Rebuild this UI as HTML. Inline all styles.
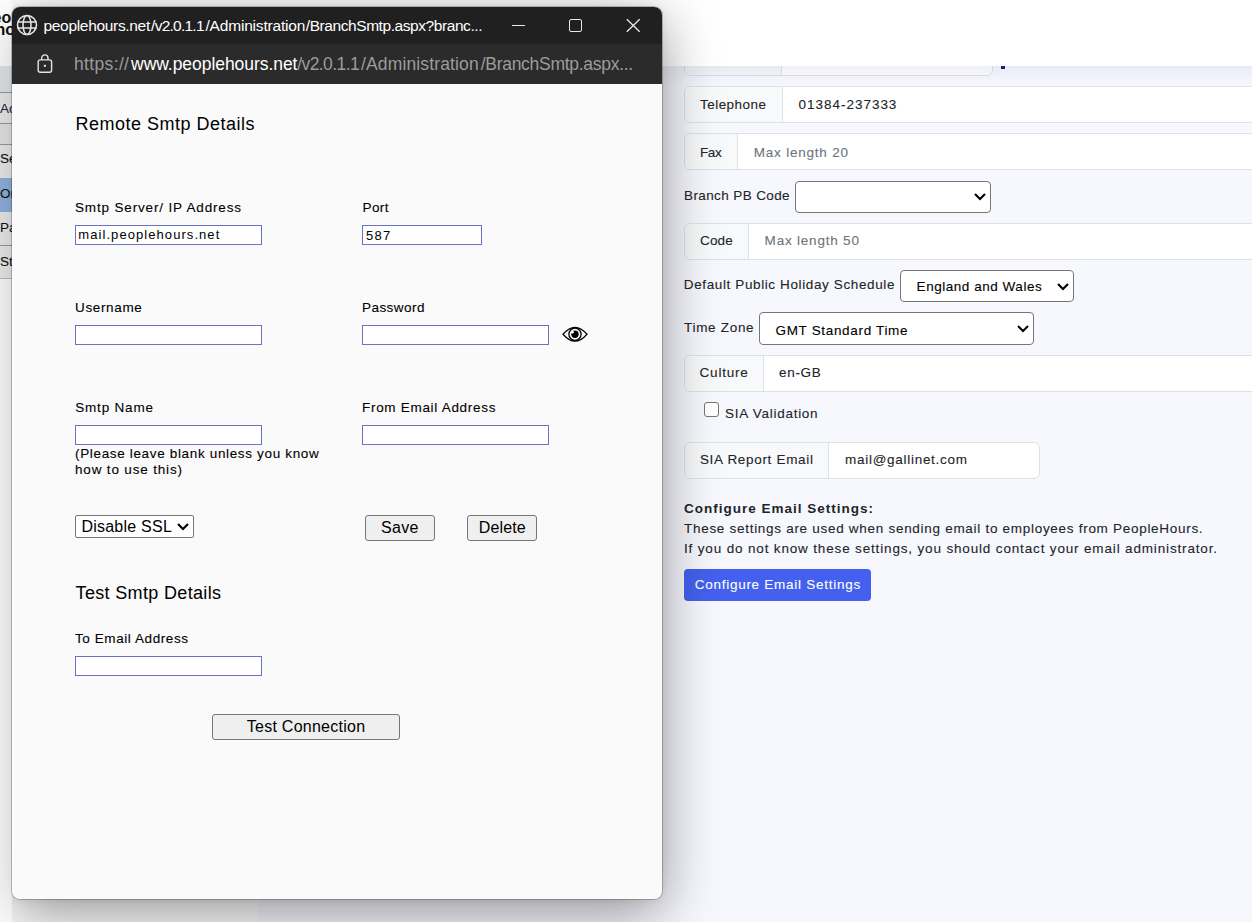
<!DOCTYPE html>
<html><head><meta charset="utf-8"><style>
html,body{margin:0;padding:0;width:1252px;height:922px;overflow:hidden;background:#fff}
body{position:relative;font-family:"Liberation Sans",sans-serif}
.t{position:absolute;white-space:nowrap}
.v{-webkit-text-stroke:0.1px currentColor}
.b{position:absolute}
</style></head><body>
<div class="b" style="left:258px;top:66px;width:994px;height:856px;background:#f7f8fe"></div>
<div class="b" style="left:0px;top:66px;width:258px;height:856px;background:#fdfdfd"></div>
<div class="b" style="left:0px;top:66px;width:258px;height:26px;background:#e3e6ec"></div>
<div class="b" style="left:0px;top:92px;width:258px;height:1px;background:#9a9a9a"></div>
<div class="b" style="left:0px;top:93px;width:258px;height:30px;background:#ececec"></div>
<div class="b" style="left:0px;top:123px;width:258px;height:1px;background:#9a9a9a"></div>
<div class="b" style="left:0px;top:124px;width:258px;height:20px;background:#e6e6e6"></div>
<div class="b" style="left:0px;top:144px;width:258px;height:1px;background:#9a9a9a"></div>
<div class="b" style="left:0px;top:145px;width:258px;height:33px;background:#ececec"></div>
<div class="b" style="left:0px;top:178px;width:258px;height:34px;background:#8fb3df"></div>
<div class="b" style="left:0px;top:212px;width:258px;height:33px;background:#ececec"></div>
<div class="b" style="left:0px;top:245px;width:258px;height:1px;background:#9a9a9a"></div>
<div class="b" style="left:0px;top:246px;width:258px;height:32px;background:#ececec"></div>
<div class="b" style="left:0px;top:278px;width:258px;height:1px;background:#bdbdbd"></div>
<div class="t v" style="left:0.00px;top:101.82px;font-size:13.5px;line-height:13.5px;letter-spacing:0.000px;color:#1a2a4a;font-weight:400;">Ac</div>
<div class="t v" style="left:0.00px;top:151.82px;font-size:13.5px;line-height:13.5px;letter-spacing:0.000px;color:#111;font-weight:400;">Se</div>
<div class="t v" style="left:0.00px;top:186.82px;font-size:13.5px;line-height:13.5px;letter-spacing:0.000px;color:#111;font-weight:400;">Or</div>
<div class="t v" style="left:0.00px;top:220.82px;font-size:13.5px;line-height:13.5px;letter-spacing:0.000px;color:#111;font-weight:400;">Pa</div>
<div class="t v" style="left:0.00px;top:254.82px;font-size:13.5px;line-height:13.5px;letter-spacing:0.000px;color:#111;font-weight:400;">St</div>
<div class="b" style="left:684px;top:40px;width:309px;height:36px;border:1px solid #dee2e6;border-radius:6px 6px 6px 6px;background:#fff;box-sizing:border-box"></div><div class="b" style="left:685px;top:41px;width:96px;height:34px;background:#f8f9fa;border-radius:5px 0 0 5px"></div><div class="b" style="left:781px;top:41px;width:1px;height:34px;background:#dee2e6"></div>
<div class="b" style="left:684px;top:86px;width:606px;height:37px;border:1px solid #dee2e6;border-radius:6px 0 0 6px;background:#fff;box-sizing:border-box"></div><div class="b" style="left:685px;top:87px;width:97px;height:35px;background:#f8f9fa;border-radius:5px 0 0 5px"></div><div class="b" style="left:782px;top:87px;width:1px;height:35px;background:#dee2e6"></div>
<div class="b" style="left:684px;top:133px;width:606px;height:37px;border:1px solid #dee2e6;border-radius:6px 0 0 6px;background:#fff;box-sizing:border-box"></div><div class="b" style="left:685px;top:134px;width:52px;height:35px;background:#f8f9fa;border-radius:5px 0 0 5px"></div><div class="b" style="left:737px;top:134px;width:1px;height:35px;background:#dee2e6"></div>
<div class="b" style="left:684px;top:223px;width:606px;height:37px;border:1px solid #dee2e6;border-radius:6px 0 0 6px;background:#fff;box-sizing:border-box"></div><div class="b" style="left:685px;top:224px;width:63px;height:35px;background:#f8f9fa;border-radius:5px 0 0 5px"></div><div class="b" style="left:748px;top:224px;width:1px;height:35px;background:#dee2e6"></div>
<div class="b" style="left:684px;top:355px;width:606px;height:37px;border:1px solid #dee2e6;border-radius:6px 0 0 6px;background:#fff;box-sizing:border-box"></div><div class="b" style="left:685px;top:356px;width:78px;height:35px;background:#f8f9fa;border-radius:5px 0 0 5px"></div><div class="b" style="left:763px;top:356px;width:1px;height:35px;background:#dee2e6"></div>
<div class="b" style="left:684px;top:442px;width:356px;height:37px;border:1px solid #dee2e6;border-radius:6px 6px 6px 6px;background:#fff;box-sizing:border-box"></div><div class="b" style="left:685px;top:443px;width:143px;height:35px;background:#f8f9fa;border-radius:5px 0 0 5px"></div><div class="b" style="left:828px;top:443px;width:1px;height:35px;background:#dee2e6"></div>
<div class="t v" style="left:700.00px;top:97.82px;font-size:13.5px;line-height:13.5px;letter-spacing:0.463px;color:#212529;font-weight:400;">Telephone</div>
<div class="t v" style="left:798.60px;top:97.82px;font-size:13.5px;line-height:13.5px;letter-spacing:0.973px;color:#212529;font-weight:400;">01384-237333</div>
<div class="t v" style="left:700.00px;top:145.82px;font-size:13.5px;line-height:13.5px;letter-spacing:-0.400px;color:#212529;font-weight:400;">Fax</div>
<div class="t v" style="left:753.80px;top:145.82px;font-size:13.5px;line-height:13.5px;letter-spacing:0.783px;color:#6c757d;font-weight:400;">Max length 20</div>
<div class="t v" style="left:684.00px;top:188.82px;font-size:13.5px;line-height:13.5px;letter-spacing:0.388px;color:#212529;font-weight:400;">Branch PB Code</div>
<div class="b" style="left:795px;top:181px;width:196px;height:32px;border:1px solid #767676;border-radius:4px;background:#fff;box-sizing:border-box"></div><svg class="b" style="left:972px;top:189.1px" width="16" height="14"><polyline points="3.00,5.00 8,10 13.00,5.00" fill="none" stroke="#000" stroke-width="2.1"/></svg>
<div class="t v" style="left:700.00px;top:233.82px;font-size:13.5px;line-height:13.5px;letter-spacing:0.183px;color:#212529;font-weight:400;">Code</div>
<div class="t v" style="left:764.60px;top:233.82px;font-size:13.5px;line-height:13.5px;letter-spacing:0.792px;color:#6c757d;font-weight:400;">Max length 50</div>
<div class="t v" style="left:683.80px;top:277.82px;font-size:13.5px;line-height:13.5px;letter-spacing:0.617px;color:#212529;font-weight:400;">Default Public Holiday Schedule</div>
<div class="b" style="left:900px;top:270px;width:174px;height:32px;border:1px solid #767676;border-radius:4px;background:#fff;box-sizing:border-box"></div><svg class="b" style="left:1055px;top:279.3px" width="16" height="14"><polyline points="3.00,5.00 8,10 13.00,5.00" fill="none" stroke="#000" stroke-width="2.1"/></svg>
<div class="t v" style="left:916.60px;top:279.82px;font-size:13.5px;line-height:13.5px;letter-spacing:0.534px;color:#000;font-weight:400;">England and Wales</div>
<div class="t v" style="left:684.00px;top:320.82px;font-size:13.5px;line-height:13.5px;letter-spacing:0.700px;color:#212529;font-weight:400;">Time Zone</div>
<div class="b" style="left:759px;top:312px;width:275px;height:33px;border:1px solid #767676;border-radius:4px;background:#fff;box-sizing:border-box"></div><svg class="b" style="left:1015px;top:321.3px" width="16" height="14"><polyline points="3.00,5.00 8,10 13.00,5.00" fill="none" stroke="#000" stroke-width="2.1"/></svg>
<div class="t v" style="left:775.50px;top:323.82px;font-size:13.5px;line-height:13.5px;letter-spacing:0.669px;color:#000;font-weight:400;">GMT Standard Time</div>
<div class="t v" style="left:699.60px;top:365.82px;font-size:13.5px;line-height:13.5px;letter-spacing:0.767px;color:#212529;font-weight:400;">Culture</div>
<div class="t v" style="left:779.10px;top:365.82px;font-size:13.5px;line-height:13.5px;letter-spacing:0.650px;color:#212529;font-weight:400;">en-GB</div>
<div class="b" style="left:704px;top:402px;width:15px;height:15px;border:1px solid #767676;border-radius:3px;background:#fff;box-sizing:border-box"></div>
<div class="t v" style="left:725.00px;top:406.82px;font-size:13.5px;line-height:13.5px;letter-spacing:0.735px;color:#212529;font-weight:400;">SIA Validation</div>
<div class="t v" style="left:699.90px;top:452.82px;font-size:13.5px;line-height:13.5px;letter-spacing:0.687px;color:#212529;font-weight:400;">SIA Report Email</div>
<div class="t v" style="left:845.00px;top:452.82px;font-size:13.5px;line-height:13.5px;letter-spacing:0.719px;color:#212529;font-weight:400;">mail@gallinet.com</div>
<div class="t" style="left:684.00px;top:501.82px;font-size:13.5px;line-height:13.5px;letter-spacing:1.000px;color:#212529;font-weight:700;">Configure Email Settings:</div>
<div class="t v" style="left:684.00px;top:521.82px;font-size:13.5px;line-height:13.5px;letter-spacing:0.710px;color:#212529;font-weight:400;">These settings are used when sending email to employees from PeopleHours.</div>
<div class="t v" style="left:684.00px;top:541.82px;font-size:13.5px;line-height:13.5px;letter-spacing:0.840px;color:#212529;font-weight:400;">If you do not know these settings, you should contact your email administrator.</div>
<div class="b" style="left:684px;top:569px;width:187px;height:32px;background:#4361ee;border-radius:4px"></div>
<div class="t v" style="left:694.70px;top:577.82px;font-size:13.5px;line-height:13.5px;letter-spacing:0.737px;color:#fff;font-weight:400;">Configure Email Settings</div>
<div class="b" style="left:0px;top:0px;width:1252px;height:66px;background:#fff"></div>
<div class="b" style="left:258px;top:66px;width:994px;height:20px;background:linear-gradient(rgba(50,60,140,0.075),rgba(50,60,140,0))"></div>
<div class="b" style="left:1001px;top:66px;width:4px;height:3px;background:#1a1a70"></div>
<div class="t" style="left:-7.40px;top:9.70px;font-size:16px;line-height:16px;letter-spacing:0.000px;color:#111;font-weight:700;">eo</div>
<div class="t" style="left:-4.50px;top:21.70px;font-size:16px;line-height:16px;letter-spacing:0.000px;color:#111;font-weight:700;">ho</div>
<div class="b" style="left:12px;top:7px;width:650px;height:892px;border-radius:8px;box-shadow:0 0 8px rgba(0,0,0,0.08),0 14px 56px rgba(0,0,0,0.42);clip-path:inset(-80px -80px -80px 0)"></div>
<div class="b" style="left:12px;top:7px;width:650px;height:892px;border-radius:8px;box-shadow:0 0 6px rgba(0,0,0,0.05),0 14px 56px rgba(0,0,0,0.22);clip-path:inset(-80px 100% -80px -80px)"></div>
<div class="b" style="left:12px;top:7px;width:650px;height:892px;border-radius:8px;background:#fafafa;box-shadow:0 0 0 1px rgba(0,0,0,0.22);overflow:hidden"><div style="position:absolute;left:0;top:0;right:0;height:37px;background:#202020"></div><div style="position:absolute;left:0;top:37px;right:0;height:40px;background:#2b2b2b"></div></div>
<svg class="b" style="left:16px;top:14px" width="22" height="22" viewBox="0 0 22 22"><g fill="none" stroke="#e8e8e8" stroke-width="1.5"><circle cx="11" cy="11" r="9.5"/><ellipse cx="11" cy="11" rx="4" ry="9.5"/><line x1="1.5" y1="8" x2="20.5" y2="8"/><line x1="1.5" y1="14" x2="20.5" y2="14"/></g></svg>
<div class="t" style="left:43.50px;top:18.13px;font-size:15.5px;line-height:15.5px;letter-spacing:-0.318px;color:#ffffff;font-weight:400;">peoplehours.net</div>
<div class="t" style="left:151.10px;top:18.13px;font-size:15.5px;line-height:15.5px;letter-spacing:-0.756px;color:#ffffff;font-weight:400;">/v2.0.1.1</div>
<div class="t" style="left:205.50px;top:18.13px;font-size:15.5px;line-height:15.5px;letter-spacing:-0.193px;color:#ffffff;font-weight:400;">/Administration</div>
<div class="t" style="left:305.80px;top:18.13px;font-size:15.5px;line-height:15.5px;letter-spacing:-0.427px;color:#ffffff;font-weight:400;">/BranchSmtp.aspx?branc...</div>
<div class="b" style="left:512px;top:25px;width:13px;height:1px;background:#e8e8e8"></div>
<div class="b" style="left:569px;top:19px;width:13px;height:13px;border:1px solid #e8e8e8;border-radius:2px;box-sizing:border-box"></div>
<svg class="b" style="left:625px;top:18px" width="16" height="16"><g stroke="#e8e8e8" stroke-width="1.3"><line x1="1.8" y1="1.2" x2="14.7" y2="13.8"/><line x1="14.7" y1="1.2" x2="1.8" y2="13.8"/></g></svg>
<svg class="b" style="left:36px;top:53px" width="18" height="21" viewBox="0 0 18 21"><g fill="none" stroke="#e4e4e4" stroke-width="1.4"><rect x="2.2" y="6.9" width="13.4" height="12.4" rx="2"/><path d="M5.7 6.9V5a3.15 3.15 0 0 1 6.3 0v1.9"/></g><rect x="7.9" y="11.8" width="2" height="2" fill="#e8e8e8"/></svg>
<div class="t" style="left:74.00px;top:56.08px;font-size:17.5px;line-height:17.5px;letter-spacing:0.350px;color:#9c9c9c;font-weight:400;">https://</div>
<div class="t" style="left:131.05px;top:56.08px;font-size:17.5px;line-height:17.5px;letter-spacing:-0.050px;color:#ffffff;font-weight:400;">www.peoplehours.net</div>
<div class="t" style="left:297.20px;top:56.08px;font-size:17.5px;line-height:17.5px;letter-spacing:-0.581px;color:#9c9c9c;font-weight:400;">/v2.0.1.1</div>
<div class="t" style="left:361.00px;top:56.08px;font-size:17.5px;line-height:17.5px;letter-spacing:0.139px;color:#9c9c9c;font-weight:400;">/Administration</div>
<div class="t" style="left:480.70px;top:56.08px;font-size:17.5px;line-height:17.5px;letter-spacing:-0.281px;color:#9c9c9c;font-weight:400;">/BranchSmtp.aspx...</div>
<div class="t" style="left:75.60px;top:115.01px;font-size:18px;line-height:18px;letter-spacing:0.497px;color:#000;font-weight:400;">Remote Smtp Details</div>
<div class="t v" style="left:75.00px;top:200.82px;font-size:13.5px;line-height:13.5px;letter-spacing:0.839px;color:#000;font-weight:400;">Smtp Server/ IP Address</div>
<div class="t v" style="left:362.50px;top:200.82px;font-size:13.5px;line-height:13.5px;letter-spacing:0.417px;color:#000;font-weight:400;">Port</div>
<div class="t v" style="left:75.00px;top:300.82px;font-size:13.5px;line-height:13.5px;letter-spacing:0.650px;color:#000;font-weight:400;">Username</div>
<div class="t v" style="left:362.00px;top:300.82px;font-size:13.5px;line-height:13.5px;letter-spacing:0.450px;color:#000;font-weight:400;">Password</div>
<div class="t v" style="left:75.20px;top:400.82px;font-size:13.5px;line-height:13.5px;letter-spacing:0.819px;color:#000;font-weight:400;">Smtp Name</div>
<div class="t v" style="left:362.00px;top:400.82px;font-size:13.5px;line-height:13.5px;letter-spacing:0.697px;color:#000;font-weight:400;">From Email Address</div>
<div class="t v" style="left:75.00px;top:446.82px;font-size:13.5px;line-height:13.5px;letter-spacing:0.657px;color:#000;font-weight:400;">(Please leave blank unless you know</div>
<div class="t v" style="left:75.00px;top:462.82px;font-size:13.5px;line-height:13.5px;letter-spacing:0.830px;color:#000;font-weight:400;">how to use this)</div>
<div class="t v" style="left:75.00px;top:631.82px;font-size:13.5px;line-height:13.5px;letter-spacing:0.580px;color:#000;font-weight:400;">To Email Address</div>
<div class="b" style="left:75px;top:225px;width:187px;height:20px;border:1px solid #6a72c6;background:#fff;box-sizing:border-box"></div>
<div class="b" style="left:362px;top:225px;width:120px;height:20px;border:1px solid #6a72c6;background:#fff;box-sizing:border-box"></div>
<div class="b" style="left:75px;top:325px;width:187px;height:20px;border:1px solid #6a72c6;background:#fff;box-sizing:border-box"></div>
<div class="b" style="left:362px;top:325px;width:187px;height:20px;border:1px solid #6a72c6;background:#fff;box-sizing:border-box"></div>
<div class="b" style="left:75px;top:425px;width:187px;height:20px;border:1px solid #6a72c6;background:#fff;box-sizing:border-box"></div>
<div class="b" style="left:362px;top:425px;width:187px;height:20px;border:1px solid #6a72c6;background:#fff;box-sizing:border-box"></div>
<div class="b" style="left:75px;top:656px;width:187px;height:20px;border:1px solid #6a72c6;background:#fff;box-sizing:border-box"></div>
<div class="t" style="left:78.30px;top:228.24px;font-size:13px;line-height:13px;letter-spacing:1.068px;color:#000;font-weight:400;">mail.peoplehours.net</div>
<div class="t" style="left:366.00px;top:229.24px;font-size:13px;line-height:13px;letter-spacing:1.300px;color:#000;font-weight:400;">587</div>
<svg class="b" style="left:559.5px;top:325px" width="30" height="19" viewBox="0 0 30 19"><path d="M3 9.25 Q15 -4.6 27 9.25 Q15 23.1 3 9.25Z" fill="none" stroke="#000" stroke-width="1.15" stroke-linejoin="miter"/><circle cx="15" cy="9.25" r="6.1" fill="none" stroke="#000" stroke-width="1.3"/><circle cx="15" cy="9.25" r="3.7" fill="#000"/><circle cx="12.5" cy="7.2" r="1.35" fill="#fff"/></svg>
<div class="b" style="left:75px;top:515px;width:119px;height:23px;border:1px solid #767676;border-radius:2px;background:#fff;box-sizing:border-box"></div>
<div class="t" style="left:81.40px;top:518.70px;font-size:16px;line-height:16px;letter-spacing:0.235px;color:#000;font-weight:400;">Disable SSL</div>
<svg class="b" style="left:175px;top:519.2px" width="16" height="14"><polyline points="3.00,5.00 8,10 13.00,5.00" fill="none" stroke="#000" stroke-width="2.1"/></svg>
<div class="b" style="left:365px;top:515px;width:70px;height:26px;border:1px solid #767676;border-radius:3px;background:#efefef;box-sizing:border-box"></div>
<div class="t" style="left:381.10px;top:519.70px;font-size:16px;line-height:16px;letter-spacing:0.283px;color:#000;font-weight:400;">Save</div>
<div class="b" style="left:467px;top:515px;width:70px;height:26px;border:1px solid #767676;border-radius:3px;background:#efefef;box-sizing:border-box"></div>
<div class="t" style="left:478.70px;top:519.70px;font-size:16px;line-height:16px;letter-spacing:0.150px;color:#000;font-weight:400;">Delete</div>
<div class="t" style="left:75.60px;top:584.01px;font-size:18px;line-height:18px;letter-spacing:0.334px;color:#000;font-weight:400;">Test Smtp Details</div>
<div class="b" style="left:212px;top:714px;width:188px;height:26px;border:1px solid #767676;border-radius:3px;background:#efefef;box-sizing:border-box"></div>
<div class="t" style="left:246.80px;top:718.70px;font-size:16px;line-height:16px;letter-spacing:0.254px;color:#000;font-weight:400;">Test Connection</div>
</body></html>
